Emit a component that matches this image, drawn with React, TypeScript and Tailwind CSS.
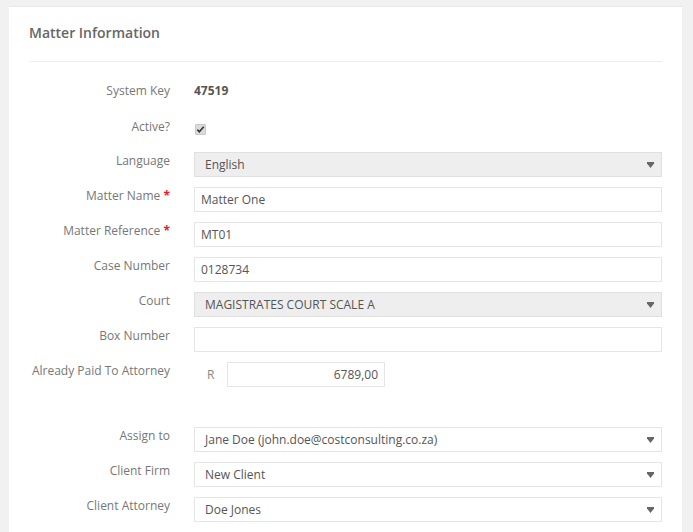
import React from 'react';

type Row = {
  label: string;
  required?: boolean;
  kind: 'input' | 'select' | 'selectWhite' | 'amount';
  value: string;
};

const rows: Row[] = [
  { label: 'Language', kind: 'select', value: 'English' },
  { label: 'Matter Name', required: true, kind: 'input', value: 'Matter One' },
  { label: 'Matter Reference', required: true, kind: 'input', value: 'MT01' },
  { label: 'Case Number', kind: 'input', value: '0128734' },
  { label: 'Court', kind: 'select', value: 'MAGISTRATES COURT SCALE A' },
  { label: 'Box Number', kind: 'input', value: '' },
  { label: 'Already Paid To Attorney', kind: 'amount', value: '6789,00' },
];

const assignRows: Row[] = [
  { label: 'Assign to', kind: 'selectWhite', value: 'Jane Doe (john.doe@costconsulting.co.za)' },
  { label: 'Client Firm', kind: 'selectWhite', value: 'New Client' },
  { label: 'Client Attorney', kind: 'selectWhite', value: 'Doe Jones' },
];

const Caret = () => (
  <svg className="w-[7px] h-[6px] text-[#666] mr-[1px]" viewBox="0 0 7 6" fill="currentColor">
    <path d="M0 0h7v1.5L3.5 6 0 1.5z" />
  </svg>
);

const Field = ({ row }: { row: Row }) => {
  if (row.kind === 'amount') {
    return (
      <div className="flex items-center h-[25px]">
        <span className="w-[33px] pl-[13px] text-[#888]">R</span>
        <div className="w-[158px] h-[25px] border border-[#e5e5e5] bg-white flex items-center justify-end pr-[6px] text-[#555]">
          {row.value}
        </div>
      </div>
    );
  }
  if (row.kind === 'select' || row.kind === 'selectWhite') {
    const bg = row.kind === 'select' ? 'bg-[#eeeeee] border-[#e0e0e0]' : 'bg-white border-[#e5e5e5]';
    return (
      <div className={`h-[25px] border ${bg} flex items-center justify-between pl-[10px] pr-[6px] text-[#555]`}>
        <span>{row.value}</span>
        <Caret />
      </div>
    );
  }
  return (
    <div className="h-[25px] border border-[#e5e5e5] bg-white flex items-center px-[6px] text-[#555]">
      {row.value}
    </div>
  );
};

const FormRow = ({ row }: { row: Row }) => (
  <div className="grid grid-cols-[141px_1fr] gap-x-[24px] h-[35px]">
    <div className="text-right text-[#777] leading-[17px]">
      {row.label}
      {row.required && <span className="text-[#e02222] font-bold"> *</span>}
    </div>
    <Field row={row} />
  </div>
);

export default function App() {
  return (
    <div
      className="min-h-[532px] bg-[#f1f1f1] pt-[6px] pl-[9px] pr-[11px] text-[12px] overflow-hidden"
      style={{ fontFamily: '"Open Sans", "Noto Sans", sans-serif' }}
    >
      <div className="bg-white border-t border-[#e8e8e8] h-[526px] px-[20px]">
        <div className="h-[55px] border-b border-[#eeeeee] flex items-center pb-[3px]">
          <h2 className="text-[14px] font-semibold text-[#666]">Matter Information</h2>
        </div>

        <div className="pt-[20px]">
          <div className="grid grid-cols-[141px_1fr] gap-x-[24px] h-[35px]">
            <div className="text-right text-[#777] leading-[17px]">System Key</div>
            <div className="font-bold text-[#555] leading-[17px]">47519</div>
          </div>
          <div className="grid grid-cols-[141px_1fr] gap-x-[24px] h-[35px]">
            <div className="text-right text-[#777] pt-[1px] leading-[17px]">Active?</div>
            <div className="pt-[7px] pl-[1px]">
              <div className="w-[11px] h-[11px] bg-[#dcdcdc] border border-[#c8c8c8] rounded-[1px] flex items-center justify-center">
                <svg viewBox="0 0 10 10" className="w-[9px] h-[9px]" fill="none" stroke="#333" strokeWidth="1.8">
                  <path d="M1.5 5.2l2.2 2.3L8.6 2" />
                </svg>
              </div>
            </div>
          </div>

          {rows.map(r => (
            <FormRow key={r.label} row={r} />
          ))}

          <div className="h-[30px]" />

          {assignRows.map(r => (
            <FormRow key={r.label} row={r} />
          ))}
        </div>
      </div>
    </div>
  );
}
